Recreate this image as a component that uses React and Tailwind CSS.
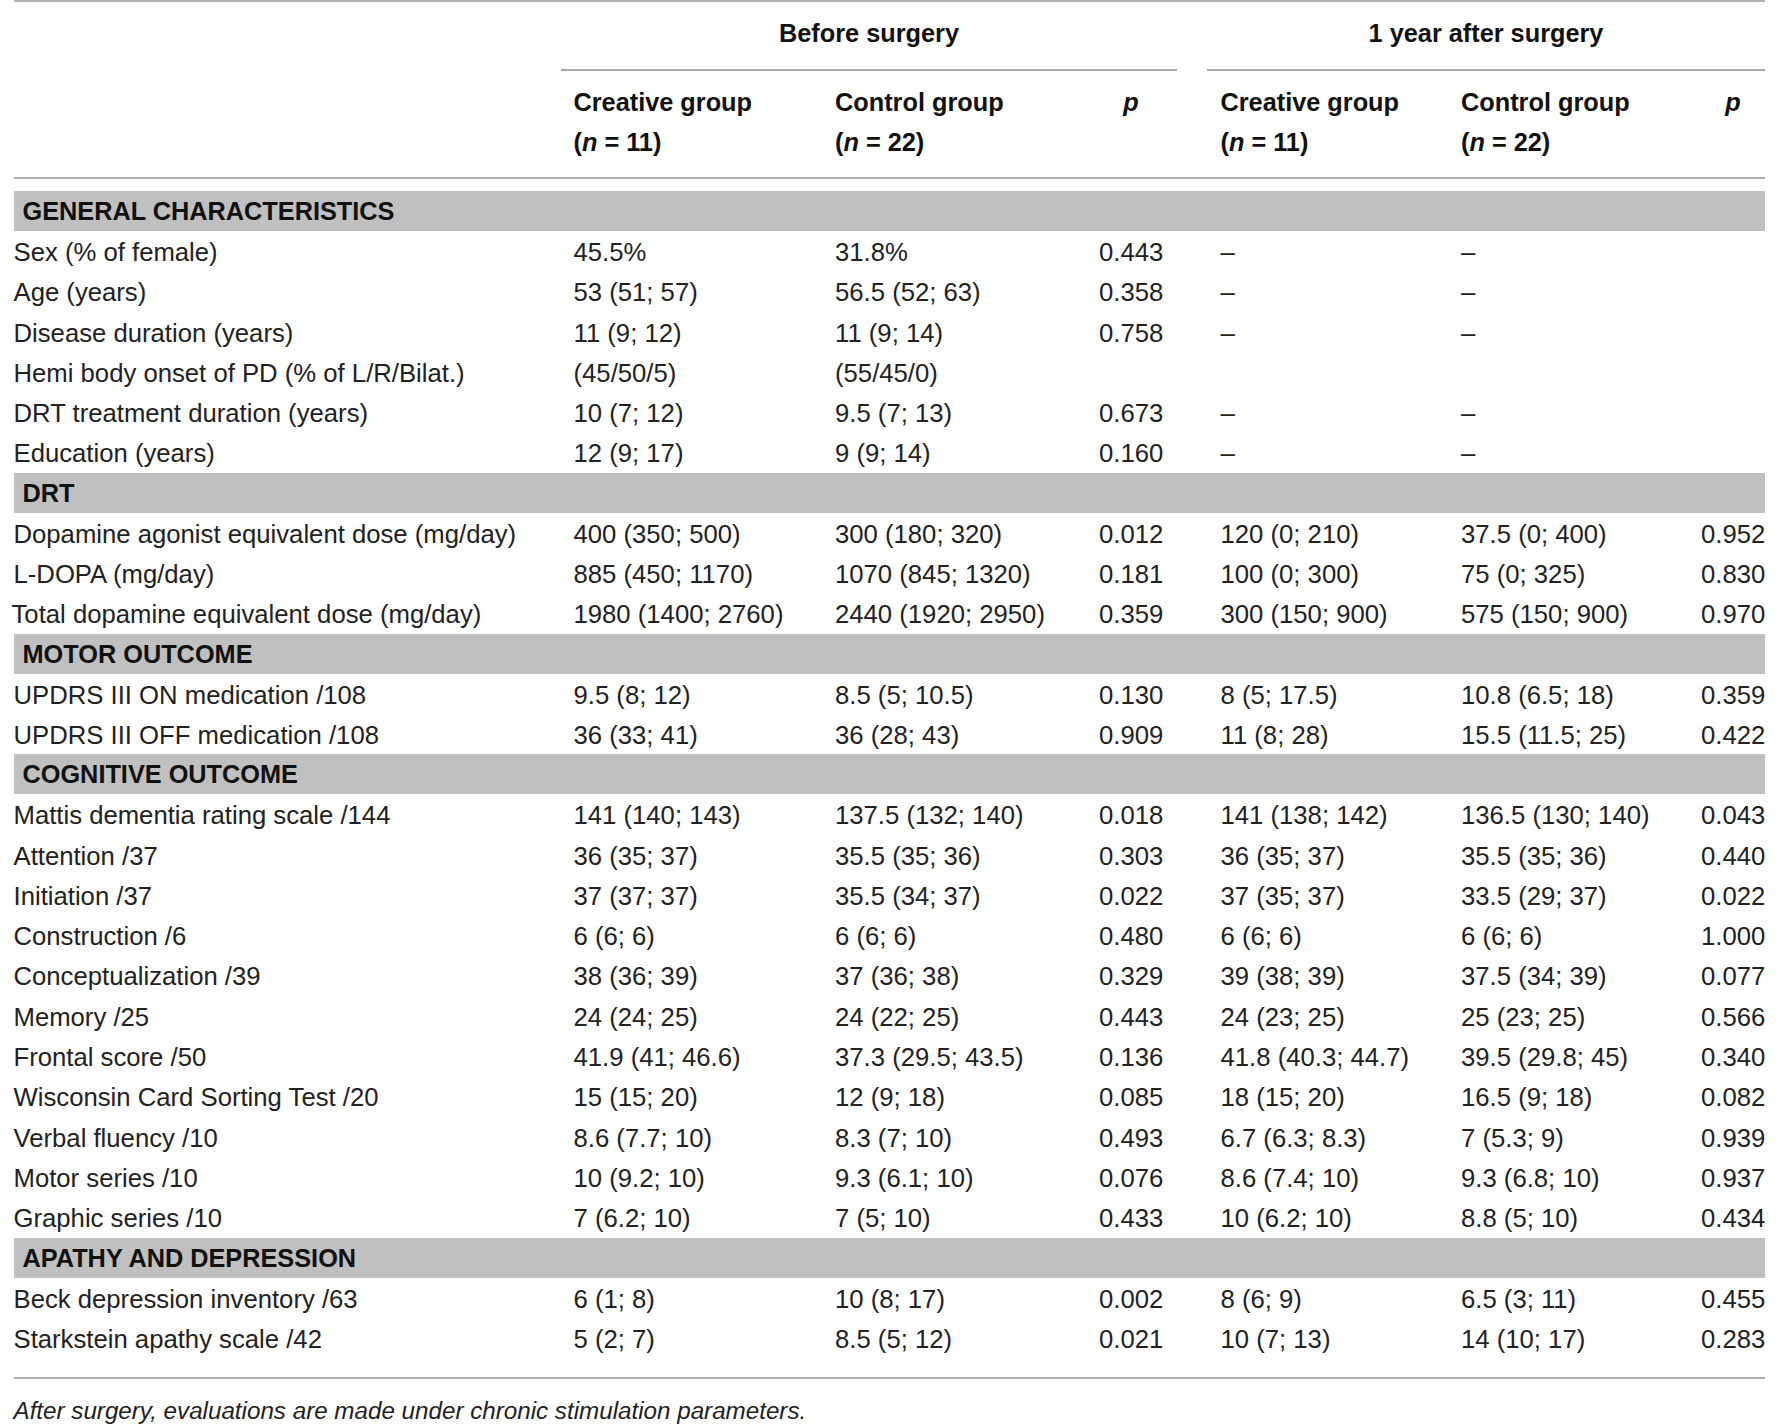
import React from "react";

const sections = [
  {
    title: "GENERAL CHARACTERISTICS",
    rows: [
      ["Sex (% of female)", "45.5%", "31.8%", "0.443", "–", "–", ""],
      ["Age (years)", "53 (51; 57)", "56.5 (52; 63)", "0.358", "–", "–", ""],
      ["Disease duration (years)", "11 (9; 12)", "11 (9; 14)", "0.758", "–", "–", ""],
      ["Hemi body onset of PD (% of L/R/Bilat.)", "(45/50/5)", "(55/45/0)", "", "", "", ""],
      ["DRT treatment duration (years)", "10 (7; 12)", "9.5 (7; 13)", "0.673", "–", "–", ""],
      ["Education (years)", "12 (9; 17)", "9 (9; 14)", "0.160", "–", "–", ""],
    ],
  },
  {
    title: "DRT",
    rows: [
      ["Dopamine agonist equivalent dose (mg/day)", "400 (350; 500)", "300 (180; 320)", "0.012", "120 (0; 210)", "37.5 (0; 400)", "0.952"],
      ["L-DOPA (mg/day)", "885 (450; 1170)", "1070 (845; 1320)", "0.181", "100 (0; 300)", "75 (0; 325)", "0.830"],
      ["Total dopamine equivalent dose (mg/day)", "1980 (1400; 2760)", "2440 (1920; 2950)", "0.359", "300 (150; 900)", "575 (150; 900)", "0.970", true],
    ],
  },
  {
    title: "MOTOR OUTCOME",
    rows: [
      ["UPDRS III ON medication /108", "9.5 (8; 12)", "8.5 (5; 10.5)", "0.130", "8 (5; 17.5)", "10.8 (6.5; 18)", "0.359"],
      ["UPDRS III OFF medication /108", "36 (33; 41)", "36 (28; 43)", "0.909", "11 (8; 28)", "15.5 (11.5; 25)", "0.422"],
    ],
  },
  {
    title: "COGNITIVE OUTCOME",
    rows: [
      ["Mattis dementia rating scale /144", "141 (140; 143)", "137.5 (132; 140)", "0.018", "141 (138; 142)", "136.5 (130; 140)", "0.043"],
      ["Attention /37", "36 (35; 37)", "35.5 (35; 36)", "0.303", "36 (35; 37)", "35.5 (35; 36)", "0.440"],
      ["Initiation /37", "37 (37; 37)", "35.5 (34; 37)", "0.022", "37 (35; 37)", "33.5 (29; 37)", "0.022"],
      ["Construction /6", "6 (6; 6)", "6 (6; 6)", "0.480", "6 (6; 6)", "6 (6; 6)", "1.000"],
      ["Conceptualization /39", "38 (36; 39)", "37 (36; 38)", "0.329", "39 (38; 39)", "37.5 (34; 39)", "0.077"],
      ["Memory /25", "24 (24; 25)", "24 (22; 25)", "0.443", "24 (23; 25)", "25 (23; 25)", "0.566"],
      ["Frontal score /50", "41.9 (41; 46.6)", "37.3 (29.5; 43.5)", "0.136", "41.8 (40.3; 44.7)", "39.5 (29.8; 45)", "0.340"],
      ["Wisconsin Card Sorting Test /20", "15 (15; 20)", "12 (9; 18)", "0.085", "18 (15; 20)", "16.5 (9; 18)", "0.082"],
      ["Verbal fluency /10", "8.6 (7.7; 10)", "8.3 (7; 10)", "0.493", "6.7 (6.3; 8.3)", "7 (5.3; 9)", "0.939"],
      ["Motor series /10", "10 (9.2; 10)", "9.3 (6.1; 10)", "0.076", "8.6 (7.4; 10)", "9.3 (6.8; 10)", "0.937"],
      ["Graphic series /10", "7 (6.2; 10)", "7 (5; 10)", "0.433", "10 (6.2; 10)", "8.8 (5; 10)", "0.434"],
    ],
  },
  {
    title: "APATHY AND DEPRESSION",
    rows: [
      ["Beck depression inventory /63", "6 (1; 8)", "10 (8; 17)", "0.002", "8 (6; 9)", "6.5 (3; 11)", "0.455"],
      ["Starkstein apathy scale /42", "5 (2; 7)", "8.5 (5; 12)", "0.021", "10 (7; 13)", "14 (10; 17)", "0.283"],
    ],
  },
];

function N({ n }) {
  return (
    <span>
      (<i>n</i>
      <span className="px-[7px]">=</span>
      {n})
    </span>
  );
}

function GroupHead({ name, n }) {
  return (
    <div className="flex flex-col">
      <div className="leading-[40px]">{name}</div>
      <div className="leading-[40px]">
        <N n={n} />
      </div>
    </div>
  );
}

export default function App() {
  return (
    <div className="w-[1778px] h-[1424px] overflow-hidden bg-white text-[#222] font-['Liberation_Sans',Arial,Helvetica,sans-serif]">
      <div className="ml-[13.5px] w-[1751.5px]">
        {/* top rule */}
        <div className="h-[2px] bg-[#b0b0b0]" />

        {/* spanning headers */}
        <div className="grid grid-cols-[547.5px_616px_30px_558px] h-[67px] text-[25.3px] font-bold text-[#111]">
          <div />
          <div className="pt-[11px] leading-[40px] text-center">Before surgery</div>
          <div />
          <div className="pt-[11px] leading-[40px] text-center">1 year after surgery</div>
        </div>
        <div className="grid grid-cols-[547.5px_616px_30px_558px] h-[2px]">
          <div />
          <div className="bg-[#a8a8a8]" />
          <div />
          <div className="bg-[#a8a8a8]" />
        </div>

        {/* group headers */}
        <div className="grid grid-cols-[560px_261.5px_264px_121.5px_240.5px_240px_64px] h-[106px] pt-[11px] text-[25.3px] font-bold text-[#111]">
          <div />
          <GroupHead name="Creative group" n="11" />
          <GroupHead name="Control group" n="22" />
          <div className="w-[64px] text-center leading-[40px]">
            <i>p</i>
          </div>
          <GroupHead name="Creative group" n="11" />
          <GroupHead name="Control group" n="22" />
          <div className="text-center leading-[40px]">
            <i>p</i>
          </div>
        </div>
        <div className="h-[2px] bg-[#b0b0b0]" />

        <div className="h-[12px]" />

        {sections.map((s) => (
          <div key={s.title}>
            <div className="h-[40px] bg-[#c0c0c0] pl-[9px] leading-[40px] text-[25.3px] font-bold text-[#111]">
              {s.title}
            </div>
            {s.rows.map((r) => (
              <div
                key={r[0]}
                className="grid grid-cols-[560px_261.5px_264px_121.5px_240.5px_240px_64px] h-[40.3px] pt-[3px] leading-[37.3px] text-[25.7px] whitespace-nowrap"
              >
                <div className={r[7] ? "-ml-[2px]" : ""}>{r[0]}</div>
                <div>{r[1]}</div>
                <div>{r[2]}</div>
                <div>{r[3]}</div>
                <div>{r[4]}</div>
                <div>{r[5]}</div>
                <div className="text-right">{r[6]}</div>
              </div>
            ))}
          </div>
        ))}

        <div className="h-[19px]" />
        <div className="h-[2px] bg-[#b0b0b0]" />
        <div className="pt-[19px] leading-[26px] text-[24.2px] italic">
          After surgery, evaluations are made under chronic stimulation parameters.
        </div>
      </div>
    </div>
  );
}
